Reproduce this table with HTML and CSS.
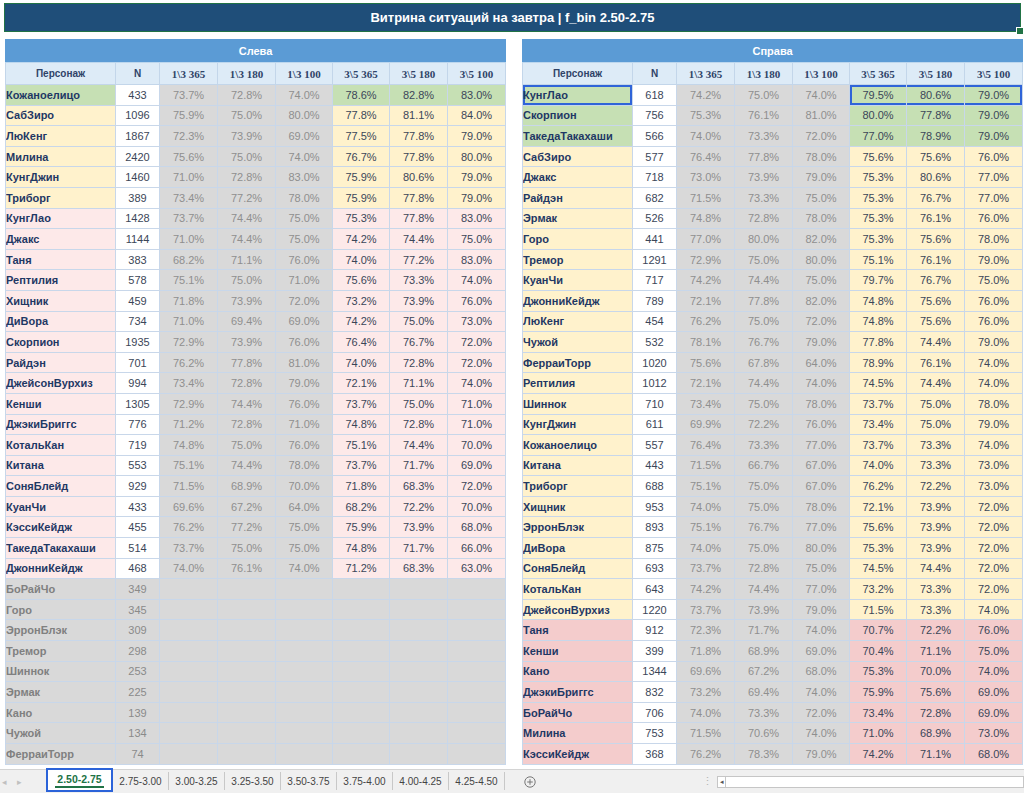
FILE: index.html
```html
<!DOCTYPE html>
<html lang="ru">
<head>
<meta charset="utf-8">
<title>Витрина ситуаций на завтра</title>
<link rel="stylesheet" href="styles.css">
</head>
<body>
<div class="sheet">
  <div class="topstrip"></div>
  <div class="title">Витрина ситуаций на завтра | f_bin 2.50-2.75</div>
  <div class="tables">
    <table class="grid">
      <colgroup><col class="c-name"><col class="c-n"><col class="c-v"><col class="c-v"><col class="c-v3"><col class="c-v3"><col class="c-v"><col class="c-v"></colgroup>
      <thead>
        <tr class="sec"><th colspan="8">Слева</th></tr>
        <tr class="hd"><th>Персонаж</th><th>N</th><th class="num">1\3 365</th><th class="num">1\3 180</th><th class="num">1\3 100</th><th class="num">3\5 365</th><th class="num">3\5 180</th><th class="num">3\5 100</th></tr>
      </thead>
      <tbody>
        <tr class="g"><th>Кожаноелицо</th><td>433</td><td>73.7%</td><td>72.8%</td><td>74.0%</td><td>78.6%</td><td>82.8%</td><td>83.0%</td></tr>
        <tr class="y"><th>СабЗиро</th><td>1096</td><td>75.9%</td><td>75.0%</td><td>80.0%</td><td>77.8%</td><td>81.1%</td><td>84.0%</td></tr>
        <tr class="y"><th>ЛюКенг</th><td>1867</td><td>72.3%</td><td>73.9%</td><td>69.0%</td><td>77.5%</td><td>77.8%</td><td>79.0%</td></tr>
        <tr class="y"><th>Милина</th><td>2420</td><td>75.6%</td><td>75.0%</td><td>74.0%</td><td>76.7%</td><td>77.8%</td><td>80.0%</td></tr>
        <tr class="y"><th>КунгДжин</th><td>1460</td><td>71.0%</td><td>72.8%</td><td>83.0%</td><td>75.9%</td><td>80.6%</td><td>79.0%</td></tr>
        <tr class="y"><th>Триборг</th><td>389</td><td>73.4%</td><td>77.2%</td><td>78.0%</td><td>75.9%</td><td>77.8%</td><td>79.0%</td></tr>
        <tr class="p"><th>КунгЛао</th><td>1428</td><td>73.7%</td><td>74.4%</td><td>75.0%</td><td>75.3%</td><td>77.8%</td><td>83.0%</td></tr>
        <tr class="p"><th>Джакс</th><td>1144</td><td>71.0%</td><td>74.4%</td><td>75.0%</td><td>74.2%</td><td>74.4%</td><td>75.0%</td></tr>
        <tr class="p"><th>Таня</th><td>383</td><td>68.2%</td><td>71.1%</td><td>76.0%</td><td>74.0%</td><td>77.2%</td><td>83.0%</td></tr>
        <tr class="p"><th>Рептилия</th><td>578</td><td>75.1%</td><td>75.0%</td><td>71.0%</td><td>75.6%</td><td>73.3%</td><td>74.0%</td></tr>
        <tr class="p"><th>Хищник</th><td>459</td><td>71.8%</td><td>73.9%</td><td>72.0%</td><td>73.2%</td><td>73.9%</td><td>76.0%</td></tr>
        <tr class="p"><th>ДиВора</th><td>734</td><td>71.0%</td><td>69.4%</td><td>69.0%</td><td>74.2%</td><td>75.0%</td><td>73.0%</td></tr>
        <tr class="p"><th>Скорпион</th><td>1935</td><td>72.9%</td><td>73.9%</td><td>76.0%</td><td>76.4%</td><td>76.7%</td><td>72.0%</td></tr>
        <tr class="p"><th>Райдэн</th><td>701</td><td>76.2%</td><td>77.8%</td><td>81.0%</td><td>74.0%</td><td>72.8%</td><td>72.0%</td></tr>
        <tr class="p"><th>ДжейсонВурхиз</th><td>994</td><td>73.4%</td><td>72.8%</td><td>79.0%</td><td>72.1%</td><td>71.1%</td><td>74.0%</td></tr>
        <tr class="p"><th>Кенши</th><td>1305</td><td>72.9%</td><td>74.4%</td><td>76.0%</td><td>73.7%</td><td>75.0%</td><td>71.0%</td></tr>
        <tr class="p"><th>ДжэкиБриггс</th><td>776</td><td>71.2%</td><td>72.8%</td><td>71.0%</td><td>74.8%</td><td>72.8%</td><td>71.0%</td></tr>
        <tr class="p"><th>КотальКан</th><td>719</td><td>74.8%</td><td>75.0%</td><td>76.0%</td><td>75.1%</td><td>74.4%</td><td>70.0%</td></tr>
        <tr class="p"><th>Китана</th><td>553</td><td>75.1%</td><td>74.4%</td><td>78.0%</td><td>73.7%</td><td>71.7%</td><td>69.0%</td></tr>
        <tr class="p"><th>СоняБлейд</th><td>929</td><td>71.5%</td><td>68.9%</td><td>70.0%</td><td>71.8%</td><td>68.3%</td><td>72.0%</td></tr>
        <tr class="p"><th>КуанЧи</th><td>433</td><td>69.6%</td><td>67.2%</td><td>64.0%</td><td>68.2%</td><td>72.2%</td><td>70.0%</td></tr>
        <tr class="p"><th>КэссиКейдж</th><td>455</td><td>76.2%</td><td>77.2%</td><td>75.0%</td><td>75.9%</td><td>73.9%</td><td>68.0%</td></tr>
        <tr class="p"><th>ТакедаТакахаши</th><td>514</td><td>73.7%</td><td>75.0%</td><td>75.0%</td><td>74.8%</td><td>71.7%</td><td>66.0%</td></tr>
        <tr class="p"><th>ДжонниКейдж</th><td>468</td><td>74.0%</td><td>76.1%</td><td>74.0%</td><td>71.2%</td><td>68.3%</td><td>63.0%</td></tr>
        <tr class="z"><th>БоРайЧо</th><td>349</td><td></td><td></td><td></td><td></td><td></td><td></td></tr>
        <tr class="z"><th>Горо</th><td>345</td><td></td><td></td><td></td><td></td><td></td><td></td></tr>
        <tr class="z"><th>ЭрронБлэк</th><td>309</td><td></td><td></td><td></td><td></td><td></td><td></td></tr>
        <tr class="z"><th>Тремор</th><td>298</td><td></td><td></td><td></td><td></td><td></td><td></td></tr>
        <tr class="z"><th>Шиннок</th><td>253</td><td></td><td></td><td></td><td></td><td></td><td></td></tr>
        <tr class="z"><th>Эрмак</th><td>225</td><td></td><td></td><td></td><td></td><td></td><td></td></tr>
        <tr class="z"><th>Кано</th><td>139</td><td></td><td></td><td></td><td></td><td></td><td></td></tr>
        <tr class="z"><th>Чужой</th><td>134</td><td></td><td></td><td></td><td></td><td></td><td></td></tr>
        <tr class="z"><th>ФерраиТорр</th><td>74</td><td></td><td></td><td></td><td></td><td></td><td></td></tr>
      </tbody>
    </table>

    <table class="grid">
      <colgroup><col class="c-name"><col class="c-n"><col class="c-v"><col class="c-v"><col class="c-v3"><col class="c-v3"><col class="c-v"><col class="c-v"></colgroup>
      <thead>
        <tr class="sec"><th colspan="8">Справа</th></tr>
        <tr class="hd"><th>Персонаж</th><th>N</th><th class="num">1\3 365</th><th class="num">1\3 180</th><th class="num">1\3 100</th><th class="num">3\5 365</th><th class="num">3\5 180</th><th class="num">3\5 100</th></tr>
      </thead>
      <tbody>
        <tr class="g"><th class="sel">КунгЛао</th><td>618</td><td>74.2%</td><td>75.0%</td><td>74.0%</td><td class="s-first">79.5%</td><td class="s-mid">80.6%</td><td class="s-last">79.0%</td></tr>
        <tr class="g"><th>Скорпион</th><td>756</td><td>75.3%</td><td>76.1%</td><td>81.0%</td><td>80.0%</td><td>77.8%</td><td>79.0%</td></tr>
        <tr class="g"><th>ТакедаТакахаши</th><td>566</td><td>74.0%</td><td>73.3%</td><td>72.0%</td><td>77.0%</td><td>78.9%</td><td>79.0%</td></tr>
        <tr class="y"><th>СабЗиро</th><td>577</td><td>76.4%</td><td>77.8%</td><td>78.0%</td><td>75.6%</td><td>75.6%</td><td>76.0%</td></tr>
        <tr class="y"><th>Джакс</th><td>718</td><td>73.0%</td><td>73.9%</td><td>79.0%</td><td>75.3%</td><td>80.6%</td><td>77.0%</td></tr>
        <tr class="y"><th>Райдэн</th><td>682</td><td>71.5%</td><td>73.3%</td><td>75.0%</td><td>75.3%</td><td>76.7%</td><td>77.0%</td></tr>
        <tr class="y"><th>Эрмак</th><td>526</td><td>74.8%</td><td>72.8%</td><td>78.0%</td><td>75.3%</td><td>76.1%</td><td>76.0%</td></tr>
        <tr class="y"><th>Горо</th><td>441</td><td>77.0%</td><td>80.0%</td><td>82.0%</td><td>75.3%</td><td>75.6%</td><td>78.0%</td></tr>
        <tr class="y"><th>Тремор</th><td>1291</td><td>72.9%</td><td>75.0%</td><td>80.0%</td><td>75.1%</td><td>76.1%</td><td>79.0%</td></tr>
        <tr class="y"><th>КуанЧи</th><td>717</td><td>74.2%</td><td>74.4%</td><td>75.0%</td><td>79.7%</td><td>76.7%</td><td>75.0%</td></tr>
        <tr class="y"><th>ДжонниКейдж</th><td>789</td><td>72.1%</td><td>77.8%</td><td>82.0%</td><td>74.8%</td><td>75.6%</td><td>76.0%</td></tr>
        <tr class="y"><th>ЛюКенг</th><td>454</td><td>76.2%</td><td>75.0%</td><td>72.0%</td><td>74.8%</td><td>75.6%</td><td>76.0%</td></tr>
        <tr class="y"><th>Чужой</th><td>532</td><td>78.1%</td><td>76.7%</td><td>79.0%</td><td>77.8%</td><td>74.4%</td><td>79.0%</td></tr>
        <tr class="y"><th>ФерраиТорр</th><td>1020</td><td>75.6%</td><td>67.8%</td><td>64.0%</td><td>78.9%</td><td>76.1%</td><td>74.0%</td></tr>
        <tr class="y"><th>Рептилия</th><td>1012</td><td>72.1%</td><td>74.4%</td><td>74.0%</td><td>74.5%</td><td>74.4%</td><td>74.0%</td></tr>
        <tr class="y"><th>Шиннок</th><td>710</td><td>73.4%</td><td>75.0%</td><td>78.0%</td><td>73.7%</td><td>75.0%</td><td>78.0%</td></tr>
        <tr class="y"><th>КунгДжин</th><td>611</td><td>69.9%</td><td>72.2%</td><td>76.0%</td><td>73.4%</td><td>75.0%</td><td>79.0%</td></tr>
        <tr class="y"><th>Кожаноелицо</th><td>557</td><td>76.4%</td><td>73.3%</td><td>77.0%</td><td>73.7%</td><td>73.3%</td><td>74.0%</td></tr>
        <tr class="y"><th>Китана</th><td>443</td><td>71.5%</td><td>66.7%</td><td>67.0%</td><td>74.0%</td><td>73.3%</td><td>73.0%</td></tr>
        <tr class="y"><th>Триборг</th><td>688</td><td>75.1%</td><td>75.0%</td><td>67.0%</td><td>76.2%</td><td>72.2%</td><td>73.0%</td></tr>
        <tr class="y"><th>Хищник</th><td>953</td><td>74.0%</td><td>75.0%</td><td>78.0%</td><td>72.1%</td><td>73.9%</td><td>72.0%</td></tr>
        <tr class="y"><th>ЭрронБлэк</th><td>893</td><td>75.1%</td><td>76.7%</td><td>77.0%</td><td>75.6%</td><td>73.9%</td><td>72.0%</td></tr>
        <tr class="y"><th>ДиВора</th><td>875</td><td>74.0%</td><td>75.0%</td><td>80.0%</td><td>75.3%</td><td>73.9%</td><td>72.0%</td></tr>
        <tr class="y"><th>СоняБлейд</th><td>693</td><td>73.7%</td><td>72.8%</td><td>75.0%</td><td>74.5%</td><td>74.4%</td><td>72.0%</td></tr>
        <tr class="y"><th>КотальКан</th><td>643</td><td>74.2%</td><td>74.4%</td><td>77.0%</td><td>73.2%</td><td>73.3%</td><td>72.0%</td></tr>
        <tr class="y"><th>ДжейсонВурхиз</th><td>1220</td><td>73.7%</td><td>73.9%</td><td>79.0%</td><td>71.5%</td><td>73.3%</td><td>74.0%</td></tr>
        <tr class="q"><th>Таня</th><td>912</td><td>72.3%</td><td>71.7%</td><td>74.0%</td><td>70.7%</td><td>72.2%</td><td>76.0%</td></tr>
        <tr class="q"><th>Кенши</th><td>399</td><td>71.8%</td><td>68.9%</td><td>69.0%</td><td>70.4%</td><td>71.1%</td><td>75.0%</td></tr>
        <tr class="q"><th>Кано</th><td>1344</td><td>69.6%</td><td>67.2%</td><td>68.0%</td><td>75.3%</td><td>70.0%</td><td>74.0%</td></tr>
        <tr class="q"><th>ДжэкиБриггс</th><td>832</td><td>73.2%</td><td>69.4%</td><td>74.0%</td><td>75.9%</td><td>75.6%</td><td>69.0%</td></tr>
        <tr class="q"><th>БоРайЧо</th><td>706</td><td>74.0%</td><td>73.3%</td><td>72.0%</td><td>73.4%</td><td>72.8%</td><td>69.0%</td></tr>
        <tr class="q"><th>Милина</th><td>753</td><td>71.5%</td><td>70.6%</td><td>74.0%</td><td>71.0%</td><td>68.9%</td><td>73.0%</td></tr>
        <tr class="q"><th>КэссиКейдж</th><td>368</td><td>76.2%</td><td>78.3%</td><td>79.0%</td><td>74.2%</td><td>71.1%</td><td>68.0%</td></tr>
      </tbody>
    </table>
  </div>
</div>

<div class="tabbar">
  <div class="nav"><span>◂</span><span>▸</span></div>
  <div class="tabs">
    <div class="tab active"><span class="label">2.50-2.75</span></div>
    <div class="tab">2.75-3.00</div>
    <div class="tab">3.00-3.25</div>
    <div class="tab">3.25-3.50</div>
    <div class="tab">3.50-3.75</div>
    <div class="tab">3.75-4.00</div>
    <div class="tab">4.00-4.25</div>
    <div class="tab">4.25-4.50</div>
  </div>
  <div class="add">
    <svg width="12" height="12" viewBox="0 0 12 12"><circle cx="6" cy="6" r="5.2" fill="none" stroke="#777" stroke-width="1"/><path d="M6 3.2v5.6M3.2 6h5.6" stroke="#777" stroke-width="1"/></svg>
  </div>
  <div class="split">⋮</div>
  <div class="hscroll"><span class="sbtn">◂</span><span class="track"></span></div>
</div>
</body>
</html>
```

FILE: styles.css
```css
* { box-sizing: border-box; }
html, body { margin: 0; padding: 0; background: #fff; }
body {
  width: 1024px;
  height: 793px;
  overflow: hidden;
  font-family: "Liberation Sans", Arial, sans-serif;
  display: flex;
  flex-direction: column;
}
.sheet { flex: 0 0 769px; overflow: hidden; }
.topstrip { height: 3px; }

.title {
  position: relative;
  margin-left: 4px;
  width: 1017px;
  height: 29px;
  background: #1f4e79;
  border: 1px solid #217346;
  color: #fff;
  font-weight: bold;
  font-size: 13px;
  display: flex;
  align-items: center;
  justify-content: center;
}
.title::after {
  content: "";
  position: absolute;
  right: -4px;
  bottom: -4px;
  width: 6px;
  height: 6px;
  background: #217346;
  border: 1px solid #fff;
}

.tables {
  display: flex;
  gap: 16px;
  padding-left: 5px;
  margin-top: 7px;
}

.grid {
  border-collapse: collapse;
  table-layout: fixed;
  width: 500px;
  font-size: 11px;
}
.c-name { width: 110px; }
.c-n { width: 44px; }
.c-v { width: 58px; }
.c-v3 { width: 57px; }

.grid th, .grid td {
  padding: 0;
  border: 1px solid #c8d7ea;
  white-space: nowrap;
  overflow: hidden;
}

.sec th {
  height: 23px;
  background: #5b9bd5;
  color: #fff;
  font-weight: bold;
  font-size: 11px;
  text-align: center;
  border-color: #5b9bd5;
  border-bottom-color: #bdd7ee;
}
.hd th {
  height: 22px;
  background: #ddebf7;
  color: #2f4368;
  font-weight: bold;
  font-size: 10px;
  text-align: center;
  border-color: #c3d6ea;
}
.hd th.num {
  font-family: "Liberation Serif", "Times New Roman", serif;
  font-size: 11px;
}

tbody tr { height: 20.6px; }
tbody th {
  text-align: left;
  padding-left: 3px;
  font-weight: bold;
  color: #1f3864;
}
tbody td {
  text-align: center;
  color: #3b4658;
}
tbody td:nth-child(2) { background: #fff; }
tbody td:nth-child(3),
tbody td:nth-child(4),
tbody td:nth-child(5) {
  background: #d9d9d9;
  color: #8f8f8f;
}

tr.g th, tr.g td:nth-child(n+6) { background: #c6e0b4; }
tr.y th, tr.y td:nth-child(n+6) { background: #fff2cc; }
tr.p th, tr.p td:nth-child(n+6) { background: #fde9e9; }
tr.q th, tr.q td:nth-child(n+6) { background: #f4cccc; }
tr.z th, tr.z td { background: #d9d9d9; color: #808080; }
tr.z td:nth-child(2) { background: #d9d9d9; color: #8a8a8a; }

th.sel { box-shadow: inset 0 0 0 2px #2f64d8; }
td.s-first { box-shadow: inset 2px 0 0 #2f64d8, inset 0 2px 0 #2f64d8, inset 0 -2px 0 #2f64d8; }
td.s-mid { box-shadow: inset 0 2px 0 #2f64d8, inset 0 -2px 0 #2f64d8; }
td.s-last { box-shadow: inset -2px 0 0 #2f64d8, inset 0 2px 0 #2f64d8, inset 0 -2px 0 #2f64d8; }

/* sheet tabs */
.tabbar {
  flex: 0 0 24px;
  display: flex;
  align-items: stretch;
  background: #f0f0f0;
  border-top: 1px solid #d4d4d4;
  font-size: 10px;
  color: #444;
}
.nav {
  width: 46px;
  display: flex;
  align-items: center;
  gap: 10px;
  padding-left: 2px;
  color: #c0c0c0;
  font-size: 9px;
}
.tabs { display: flex; align-items: stretch; }
.tab {
  width: 56px;
  display: flex;
  align-items: center;
  justify-content: center;
  border-right: 1px solid #c8c8c8;
  margin: 2px 0 3px;
}
.tab.active {
  width: 67px;
  margin: -2px 0 1px;
  background: #fff;
  border: 2px solid #2b63d9;
  color: #217346;
  font-weight: bold;
  font-size: 10.5px;
}
.tab.active .label {
  padding: 0 2px 1px;
  border-bottom: 2px solid #217346;
}
.add {
  width: 50px;
  display: flex;
  align-items: center;
  justify-content: center;
}
.split {
  margin-left: 144px;
  width: 16px;
  display: flex;
  align-items: center;
  justify-content: center;
  color: #b5b5b5;
  font-size: 11px;
}
.hscroll {
  flex: 1;
  display: flex;
  align-items: center;
  padding-left: 2px;
}
.sbtn {
  width: 9px;
  height: 12px;
  background: #fff;
  border: 1px solid #c6c6c6;
  font-size: 7px;
  color: #555;
  display: flex;
  align-items: center;
  justify-content: center;
}
.track {
  flex: 1;
  height: 12px;
  background: #fff;
  border: 1px solid #c6c6c6;
  border-left: 0;
}
```
